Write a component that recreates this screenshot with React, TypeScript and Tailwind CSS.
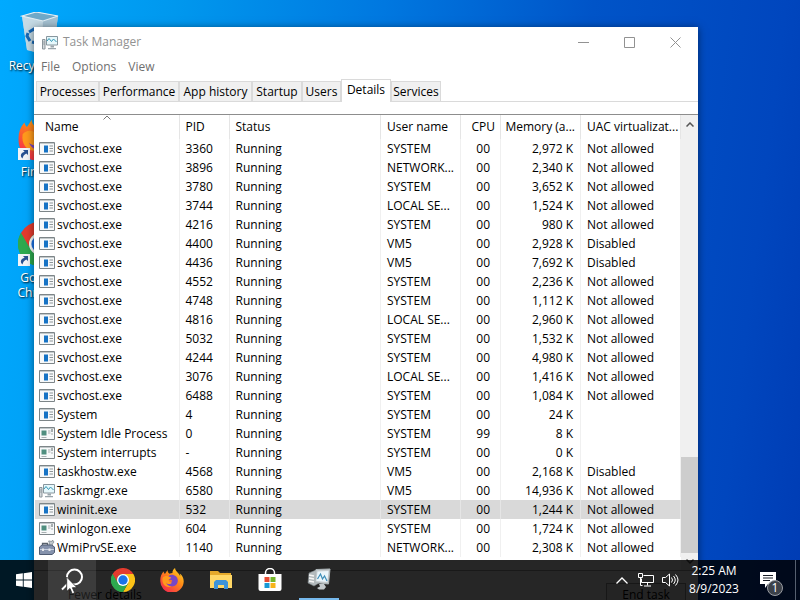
import type { ReactNode } from "react";

type IconKind = "app" | "system" | "monitor" | "tools";

type Process = {
  name: string;
  pid: string;
  user: string;
  cpu?: string;
  memory: string;
  uac: string;
  icon?: IconKind;
  selected?: boolean;
};

const processes: Process[] = [
  { name: "svchost.exe", pid: "3360", user: "SYSTEM", memory: "2,972 K", uac: "Not allowed" },
  { name: "svchost.exe", pid: "3896", user: "NETWORK...", memory: "2,340 K", uac: "Not allowed" },
  { name: "svchost.exe", pid: "3780", user: "SYSTEM", memory: "3,652 K", uac: "Not allowed" },
  { name: "svchost.exe", pid: "3744", user: "LOCAL SE...", memory: "1,524 K", uac: "Not allowed" },
  { name: "svchost.exe", pid: "4216", user: "SYSTEM", memory: "980 K", uac: "Not allowed" },
  { name: "svchost.exe", pid: "4400", user: "VM5", memory: "2,928 K", uac: "Disabled" },
  { name: "svchost.exe", pid: "4436", user: "VM5", memory: "7,692 K", uac: "Disabled" },
  { name: "svchost.exe", pid: "4552", user: "SYSTEM", memory: "2,236 K", uac: "Not allowed" },
  { name: "svchost.exe", pid: "4748", user: "SYSTEM", memory: "1,112 K", uac: "Not allowed" },
  { name: "svchost.exe", pid: "4816", user: "LOCAL SE...", memory: "2,960 K", uac: "Not allowed" },
  { name: "svchost.exe", pid: "5032", user: "SYSTEM", memory: "1,532 K", uac: "Not allowed" },
  { name: "svchost.exe", pid: "4244", user: "SYSTEM", memory: "4,980 K", uac: "Not allowed" },
  { name: "svchost.exe", pid: "3076", user: "LOCAL SE...", memory: "1,416 K", uac: "Not allowed" },
  { name: "svchost.exe", pid: "6488", user: "SYSTEM", memory: "1,084 K", uac: "Not allowed" },
  { name: "System", pid: "4", user: "SYSTEM", memory: "24 K", uac: "" },
  { name: "System Idle Process", pid: "0", user: "SYSTEM", cpu: "99", memory: "8 K", uac: "", icon: "system" },
  { name: "System interrupts", pid: "-", user: "SYSTEM", memory: "0 K", uac: "", icon: "system" },
  { name: "taskhostw.exe", pid: "4568", user: "VM5", memory: "2,168 K", uac: "Disabled" },
  { name: "Taskmgr.exe", pid: "6580", user: "VM5", memory: "14,936 K", uac: "Not allowed", icon: "monitor" },
  { name: "wininit.exe", pid: "532", user: "SYSTEM", memory: "1,244 K", uac: "Not allowed", selected: true },
  { name: "winlogon.exe", pid: "604", user: "SYSTEM", memory: "1,724 K", uac: "Not allowed", icon: "system" },
  { name: "WmiPrvSE.exe", pid: "1140", user: "NETWORK...", memory: "2,308 K", uac: "Not allowed", icon: "tools" },
];

const tabs = [
  { label: "Processes", width: "w-[63px]" },
  { label: "Performance", width: "w-[80px]" },
  { label: "App history", width: "w-[73px]" },
  { label: "Startup", width: "w-[50px]" },
  { label: "Users", width: "w-[39px]" },
  { label: "Details", width: "w-[50px]" },
  { label: "Services", width: "w-[50px]" },
];

/* ICONS */

const MonitorIcon = () => (
  <svg viewBox="0 0 16 15" className="h-[15px] w-4 shrink-0">
    <path d="M.5 4.500h2.500v9.500H.5z" fill="#d5dadd" stroke="#8b959b" />
    <path d="M1 7h2M1 9h2" stroke="#8b959b" strokeWidth=".8" />
    <path d="M4.500 1.500h11v8.500h-11z" fill="#e6f8fc" stroke="#87969e" />
    <path d="M5 6l2-2.500 2.500 3 2-2.500L14.500 7" fill="none" stroke="#3497b5" />
    <path d="M8.500 10.500h3.500v2H8.500zM6 13h8v1.200H6z" fill="#9aa5ab" />
  </svg>
);

const ProcessIcon = ({ kind }: { kind: IconKind }) => {
  if (kind === "monitor") return <MonitorIcon />;
  if (kind === "tools")
    return (
      <svg viewBox="0 0 16 15" className="h-[15px] w-4 shrink-0">
        <path d="M9.500 7l1-4-1-2h2l1 1 1-2 1.500 2-1.500 2-.5 4z" fill="#c0c7cc" stroke="#66727a" strokeWidth=".6" />
        <path d="M3.500 5.500V3.500h5v2" fill="none" stroke="#59626b" strokeWidth="1.300" />
        <path d="M.5 7L3 5h9.500L15.500 7v5.500l-2.500 2H.5z" fill="#8592ac" stroke="#505c73" />
        <path d="M1 9.500h14" stroke="#c7d0df" />
        <path d="M3 8.500h2v2.500H3zM9.500 8.500h2v2.500h-2z" fill="#e5e7eb" />
      </svg>
    );
  return (
    <svg viewBox="0 0 16 13" className="h-[13px] w-4 shrink-0">
      <path d="M.5.5h15v12H.5z" fill="#f7f9fa" stroke="#7d8588" />
      <path d="M1 1.500h14" stroke="#c3c9cb" />
      {kind === "app" ? (
        <>
          <path d="M5 3.500h4v7H5z" fill="#1673c5" />
          <path d="M10.500 4h3.500M10.500 6.500h3.500M10.500 9h3.500" stroke="#8e9699" />
        </>
      ) : (
        <>
          <path d="M2.500 3.500h5v5h-5z" fill="#4f8e7f" />
          <path d="M9 4h2.500M9 6h2.500M2.500 10.500h5" stroke="#a7afb1" />
          <path d="M13 2v3M13 6.500v1" stroke="#596467" />
        </>
      )}
    </svg>
  );
};

const ChromeIcon = ({ className }: { className: string }) => (
  <svg viewBox="0 0 24 24" className={className}>
    <path d="M12 6h10.400A12 12 0 0 1 12 24l5.200-9z" fill="#fbc116" />
    <path d="M1.600 6A12 12 0 0 0 12 24l5.200-9L12 12l-5.200 3z" fill="#2da94f" />
    <path d="M1.600 6L6.800 15 12 12V6z" fill="#2da94f" />
    <path d="M1.600 6A12 12 0 0 1 22.400 6H12a6 6 0 0 0-5.200 9z" fill="#e33b2e" />
    <path d="M1.600 6L6.800 15A6 6 0 0 0 12 18l-1 5.900A12 12 0 0 1 1.600 6z" fill="#2da94f" />
    <circle cx="12" cy="12" r="6" fill="#fff" />
    <circle cx="12" cy="12" r="4.700" fill="#1a73e8" />
  </svg>
);

const FirefoxIcon = ({ className }: { className: string }) => (
  <svg viewBox="0 0 24 24" className={className}>
    <defs>
      <linearGradient id="flame" x1="1" y1="0" x2=".2" y2="1">
        <stop offset="0" stopColor="#ffe22c" />
        <stop offset=".45" stopColor="#ff8b16" />
        <stop offset="1" stopColor="#f5264f" />
      </linearGradient>
    </defs>
    <path
      d="M3.500 3.500c.2 1 .7 1.800 1.400 2.500L7.500 2c0 1.800.8 2.800 2 3.700 1-.4 2-.6 3-.6-.2-2 .7-3.800 2.500-5 .3 2.500 2 3.700 3.500 5.400.8.9 1.300 1.700 1.700 2.700.1-1-.1-1.900-.5-2.700 2.800 2 4.100 5 4 8.200A11.700 11.700 0 0 1 .3 12.500C.2 9 1.200 6 3.500 3.500z"
      fill="url(#flame)"
    />
    <path
      d="M9 7.500c4-2 8.500.7 8.800 4.800.2 3.800-2.600 6.200-6 6.200-3 0-5.300-1.700-5.800-4.300 1.500 1.300 3.300 1 4.500.2 1-.7 2-.8 1.700-1.600-.4-1.100-1.700-.6-2.700-1-1.500-.7-1.600-2.500-.5-4.300z"
      fill="#7847c5"
    />
    <path
      d="M2.500 10c1.500-2 4-2.500 6-1.500l2.700 1c-.3 1-1.200 1.400-2.400 1.600-.8 2 1 3.800 3.200 3.300-1.500 2-4.500 2-6 0 .6 2.800 3.600 4.500 6.500 3.600-6 3-11-1.500-10-8z"
      fill="#ff9a1c"
    />
  </svg>
);

const RecycleBinIcon = () => (
  <svg viewBox="0 0 40 42" className="h-[42px] w-10">
    <path d="M2 4L16 0l22 4-5 36-7 2-19-4z" fill="#b8d5e5" />
    <path d="M2 4l21 4-1 34-15-4z" fill="#c4dae5" />
    <path d="M23 8l15-4-5 36-11 2z" fill="#a3c0d1" />
    <path d="M2 4L16 0l22 4-15 5z" fill="#6fa9c8" stroke="#e3eef4" strokeWidth="1.200" />
    <path d="M9 20l5-3 3 4M18 24l-2 7-4-1M10 29l-3-5 1-3" fill="none" stroke="#1769b7" strokeWidth="3" />
  </svg>
);

const ShortcutIcon = () => (
  <svg viewBox="0 0 12 12" className="absolute bottom-0 left-0 h-3 w-3">
    <path d="M0 0h12v12H0z" fill="#f2f4f7" />
    <path d="M5 2h5v5L8.300 5.400C6 6.500 5 8 4.500 10.500 1.500 7.500 3 4.800 6.600 3.700z" fill="#285191" />
  </svg>
);

const StoreIcon = () => (
  <svg viewBox="0 0 24 24" className="h-6 w-6">
    <path d="M7.500 7V5a4.500 4.500 0 0 1 9 0v2" fill="none" stroke="#fff" strokeWidth="1.500" />
    <path d="M.5 6h23v15a2 2 0 0 1-2 2h-19a2 2 0 0 1-2-2z" fill="#fff" />
    <path d="M6.500 9h5v5h-5z" fill="#e64b32" />
    <path d="M12.500 9h5v5h-5z" fill="#75b72b" />
    <path d="M6.500 15h5v5h-5z" fill="#1998d5" />
    <path d="M12.500 15h5v5h-5z" fill="#f7b51b" />
  </svg>
);

const FolderIcon = () => (
  <svg viewBox="0 0 24 22" className="h-[22px] w-6">
    <path d="M1 2h8l2 2h11v15H1z" fill="#e5a92b" />
    <path d="M1 6h22v13H1z" fill="#ffd766" />
    <path d="M5 20v-7l2-2h10l2 2v7h-4v-4H9v4z" fill="#3d93d8" />
  </svg>
);

const TaskManagerIcon = () => (
  <svg viewBox="0 0 24 24" className="h-6 w-6">
    <path d="M2 6l7-3 3 1v12l-5 3-6-3z" fill="#b3babd" stroke="#7c8588" strokeWidth=".6" />
    <path d="M2 8l5 1M2 11l5 1M2 14l5 1" stroke="#f5f5f5" strokeWidth="1.400" />
    <path d="M9 2.500L23 2l-1.500 15L8 15.500z" fill="#c4cacd" stroke="#aeb6b9" />
    <path d="M10.500 4.500l11-.5-1.200 11-11-1z" fill="#eaf5fb" />
    <path d="M10.500 12l3-5 2 5 2-3 2.500 5" fill="none" stroke="#3c8db7" strokeWidth="1.200" />
    <path d="M12 17h5l2 3-2 2.500h-5L10 21l3-1.500z" fill="#c3c9cc" />
  </svg>
);

const SearchIcon = () => (
  <svg viewBox="0 0 22 24" className="h-6 w-[22px]" fill="none" stroke="#fff" strokeWidth="2">
    <circle cx="13.500" cy="9" r="7.500" />
    <path d="M8 14.500L1 21.500" />
  </svg>
);

/* DESKTOP */

const Shortcut = ({ label, children }: { label: string; children: ReactNode }) => (
  <button className="flex w-20 flex-col items-center gap-1 px-2 text-center text-xs leading-[15px] text-white text-shadow-[1px_1px_2px_#000]">
    {children}
    <span>{label}</span>
  </button>
);

/* TASK MANAGER */

const TitleBar = () => (
  <header className="flex h-[30px] shrink-0 items-center pl-2 text-[#929292]">
    <MonitorIcon />
    <h1 className="ml-[5px] flex-1 text-xs">Task Manager</h1>
    <button aria-label="Minimize" className="flex h-full w-[46px] items-center justify-center">
      <svg viewBox="0 0 11 11" className="h-[11px] w-[11px]" stroke="currentColor">
        <path d="M0 5.500h11" />
      </svg>
    </button>
    <button aria-label="Maximize" className="flex h-full w-[46px] items-center justify-center">
      <svg viewBox="0 0 11 11" className="h-[11px] w-[11px]" fill="none" stroke="currentColor">
        <path d="M.5.5h10v10H.5z" />
      </svg>
    </button>
    <button aria-label="Close" className="flex h-full w-[46px] items-center justify-center">
      <svg viewBox="0 0 11 11" className="h-[11px] w-[11px]" stroke="currentColor">
        <path d="M.5.5l10 10M10.500.5l-10 10" />
      </svg>
    </button>
  </header>
);

const ProcessTable = () => (
  <table className="w-full table-fixed border-collapse text-left whitespace-nowrap">
    <colgroup>
      <col className="w-[144px]" />
      <col className="w-[50px]" />
      <col />
      <col className="w-20" />
      <col className="w-10" />
      <col className="w-20" />
      <col className="w-[100px]" />
    </colgroup>
    <thead>
      <tr className="h-6 *:border-r *:border-[#e5e5e5] *:font-normal">
        <th className="relative pl-[10px]">
          Name
          <svg viewBox="0 0 8 5" className="absolute top-0 left-[68px] h-[5px] w-2" fill="none" stroke="#777">
            <path d="M.5 4.500L4 1l3.500 3.500" />
          </svg>
        </th>
        <th className="pl-[6px]">PID</th>
        <th className="pl-[6px]">Status</th>
        <th className="pl-[6px]">User name</th>
        <th className="pr-[5px] text-right">CPU</th>
        <th className="pr-[5px] text-right">Memory (a...</th>
        <th className="pl-[6px]">UAC virtualizat...</th>
      </tr>
    </thead>
    <tbody>
      {processes.map((process) => (
        <tr
          key={process.name + process.pid}
          className={
            process.selected
              ? "h-[19px] bg-[#d9d9d9] *:border-r *:border-[#e5e5e5]"
              : "h-[19px] *:border-r *:border-[#f0f0f0]"
          }
        >
          <td className="pl-1">
            <div className="flex items-center gap-[2px]">
              <ProcessIcon kind={process.icon ?? "app"} />
              {process.name}
            </div>
          </td>
          <td className="pl-[6px]">{process.pid}</td>
          <td className="pl-[6px]">Running</td>
          <td className="pl-[6px]">{process.user}</td>
          <td className="pr-[10px] text-right">{process.cpu ?? "00"}</td>
          <td className="pr-[7px] text-right">{process.memory}</td>
          <td className="pl-[6px]">{process.uac}</td>
        </tr>
      ))}
    </tbody>
  </table>
);

const Tab = ({ label, width, active }: { label: string; width: string; active: boolean }) => (
  <button
    role="tab"
    aria-selected={active}
    className={
      active
        ? `${width} -mb-px h-[23px] border border-b-0 border-[#dadada] bg-white pb-[2px]`
        : `${width} h-5 border border-b-0 border-[#dadada] bg-[#f0f0f0]`
    }
  >
    {label}
  </button>
);

const TaskManager = () => (
  <section className="absolute top-[27px] right-[102px] -bottom-[18px] left-[34px] flex flex-col bg-white shadow-[0_1px_8px_rgba(0,0,0,0.5)]">
    <TitleBar />
    <nav className="flex h-[19px] shrink-0 items-center gap-3 pl-[7px] text-[#6f6f6f]">
      <button>File</button>
      <button>Options</button>
      <button>View</button>
    </nav>
    <div
      role="tablist"
      className="flex h-[26px] shrink-0 items-end border-b border-[#dadada] pl-[2px]"
    >
      {tabs.map((tab) => (
        <Tab key={tab.label} label={tab.label} width={tab.width} active={tab.label === "Details"} />
      ))}
    </div>
    <div className="mt-3 flex min-h-0 flex-1 border-t border-[#8d8d8d]">
      <div className="min-w-0 flex-1 pl-px">
        <ProcessTable />
      </div>
      <div className="flex w-[17px] flex-col items-center bg-[#f0f0f0]">
        <svg viewBox="0 0 8 5" className="mt-[7px] h-[5px] w-2" fill="none" stroke="#555" strokeWidth="1.500">
          <path d="M.5 4.500L4 1l3.500 3.500" />
        </svg>
        <div className="mt-auto h-24 w-full bg-[#cdcdcd]" />
        <svg viewBox="0 0 8 5" className="my-[6px] h-[5px] w-2 shrink-0" fill="none" stroke="#555" strokeWidth="1.500">
          <path d="M.5.5L4 4 7.500.5" />
        </svg>
      </div>
    </div>
    <footer className="flex h-12 shrink-0 items-center justify-between border-t border-[#aaa] pr-3 pl-[34px]">
      <button>Fewer details</button>
      <button className="h-[23px] w-20 border border-[#999] bg-[#eee]">End task</button>
    </footer>
  </section>
);

/* TASKBAR */

const Taskbar = () => (
  <footer className="absolute inset-x-0 bottom-0 flex h-10 bg-black/85 text-white">
    <div className="flex flex-1 *:flex *:h-10 *:items-center *:justify-center">
      <button aria-label="Start" className="w-12">
        <svg viewBox="0 0 16 16" className="h-4 w-4" fill="#fff">
          <path d="M0 2.300L6.800 1.300v6.300H0zM7.700 1.200L16 0v7.600H7.700zM0 8.500h6.800v6.300L0 13.800zM7.700 8.500H16V16l-8.300-1.200z" />
        </svg>
      </button>
      <button aria-label="Search" className="relative mr-[2px] w-12 bg-white/10">
        <SearchIcon />
        <svg viewBox="0 0 12 19" className="absolute top-4 left-[18px] h-[19px] w-3">
          <path d="M.7 1v14.500L4 12.500l2.200 5.300 2.500-1-2.300-5.100H11z" fill="#fff" stroke="#222" strokeWidth=".8" />
        </svg>
      </button>
      <button aria-label="Google Chrome" className="w-[49px]">
        <ChromeIcon className="h-6 w-6" />
      </button>
      <button aria-label="Firefox" className="w-[49px]">
        <FirefoxIcon className="h-6 w-6" />
      </button>
      <button aria-label="File Explorer" className="w-[49px]">
        <FolderIcon />
      </button>
      <button aria-label="Microsoft Store" className="w-[49px]">
        <StoreIcon />
      </button>
      <button aria-label="Task Manager" className="mx-[5px] w-10 border-b-2 border-[#76b9ed]">
        <TaskManagerIcon />
      </button>
    </div>
    <div className="flex items-center">
      <button aria-label="Show hidden icons" className="flex w-6 justify-center">
        <svg viewBox="0 0 12 7" className="h-[7px] w-3" fill="none" stroke="#fff" strokeWidth="1.300">
          <path d="M.5 6.500L6 1l5.500 5.500" />
        </svg>
      </button>
      <button aria-label="Network" className="flex w-6 justify-center">
        <svg viewBox="0 0 16 14" className="h-[14px] w-4" fill="none" stroke="#fff">
          <path d="M5.500 2.500h10v7h-12v-4M9.500 9.500v3M6 13h7M.5.5h4v4h-4zM2.500 4.500v8h2" />
        </svg>
      </button>
      <button aria-label="Volume" className="flex w-6 justify-center">
        <svg viewBox="0 0 17 14" className="h-[14px] w-[17px]" fill="none" stroke="#fff">
          <path d="M.5 4.500h3l4-3.500v12l-4-3.500h-3zM9.500 4.500q2 2.500 0 5M11.500 3q3.500 4 0 8M13.500 1.500q5 5.500 0 11" />
        </svg>
      </button>
      <button className="w-16 text-center leading-[18px]">
        2:25 AM
        <br />
        8/9/2023
      </button>
      <button aria-label="1 notification" className="relative flex h-10 w-[49px] items-center justify-center pr-[5px]">
        <svg viewBox="0 0 16 16" className="h-4 w-4">
          <path d="M0 0h16v12H8l-3 4v-4H0z" fill="#fff" />
          <path d="M3 3.500h10M3 6h10M3 8.500h7" stroke="#171c26" />
        </svg>
        <span className="absolute right-3 bottom-1 h-4 w-4 rounded-full border border-[#9a9da3] bg-[#3c4149] text-center text-xs leading-[14px]">
          1
        </span>
      </button>
      <button aria-label="Show desktop" className="h-10 w-[5px] border-l border-[#56606f]" />
    </div>
  </footer>
);

const App = () => {
  return (
    <main className="relative h-screen min-h-[600px] overflow-hidden bg-[linear-gradient(97deg,#00aaff_0%,#0098ee_20%,#0078e0_44%,#0054c8_68%,#0046be_90%,#003cb4_100%)] font-['Open_Sans','Noto_Sans',sans-serif] text-xs leading-4 text-black">
      <div className="flex flex-col items-start">
        <div className="pt-3">
          <Shortcut label="Recycle Bin">
            <RecycleBinIcon />
          </Shortcut>
        </div>
        <div className="pt-[43px]">
          <Shortcut label="Firefox">
            <span className="relative">
              <FirefoxIcon className="h-11 w-11" />
              <ShortcutIcon />
            </span>
          </Shortcut>
        </div>
        <div className="pt-[43px]">
          <Shortcut label="Google Chrome">
            <span className="relative">
              <ChromeIcon className="h-11 w-11" />
              <ShortcutIcon />
            </span>
          </Shortcut>
        </div>
      </div>
      <TaskManager />
      <Taskbar />
    </main>
  );
};

export default App;
